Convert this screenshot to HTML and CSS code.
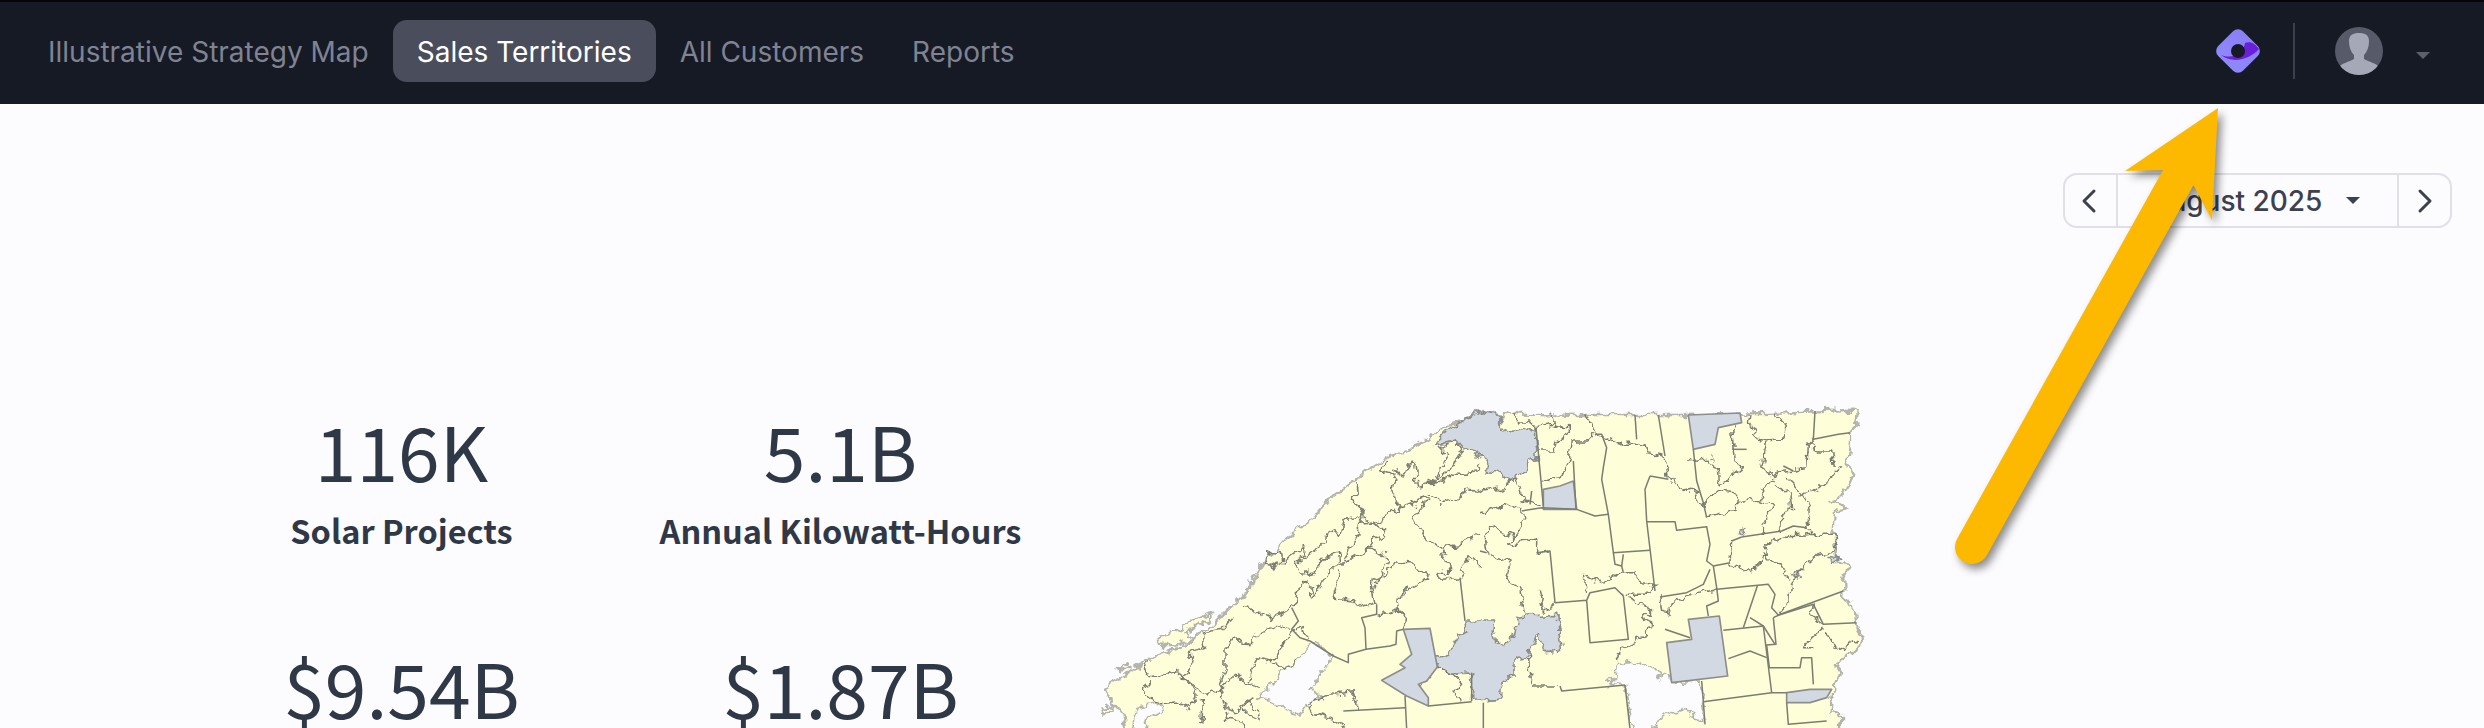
FILE: index.html
```html
<!DOCTYPE html>
<html lang="en">
<head>
    <meta charset="UTF-8">
    <title>Sales Territories</title>
    <link rel="stylesheet" href="styles.css">
</head>
<body>
    <header class="topbar">
        <nav class="nav">
            <a class="nav-item">Illustrative Strategy Map</a>
            <a class="nav-item active">Sales Territories</a>
            <a class="nav-item">All Customers</a>
            <a class="nav-item">Reports</a>
        </nav>
        <div class="topbar-right">
            <svg class="logo" viewBox="0 0 46 46">
                <defs>
                    <linearGradient id="logoFill" x1="0" y1="0" x2="0" y2="1">
                        <stop offset="0" stop-color="#8a80f5"/>
                        <stop offset="1" stop-color="#8f88fb"/>
                    </linearGradient>
                </defs>
                <rect x="5.5" y="5.5" width="35" height="35" rx="7" transform="rotate(45 23 23)" fill="url(#logoFill)"/>
                <path d="M6 27 C17 31 28 27 30 15 C36 13 40 16 44 21 C36 30 19 37 6 27 Z" fill="#6a1fd8"/>
                <circle cx="23" cy="23" r="7" fill="#161a25"/>
            </svg>
            <div class="divider"></div>
            <svg class="avatar" viewBox="0 0 48 48">
                <clipPath id="avatarClip"><circle cx="24" cy="24" r="24"/></clipPath>
                <circle cx="24" cy="24" r="24" fill="#575b69"/>
                <g clip-path="url(#avatarClip)" fill="#a5a8b7">
                    <path d="M14 14 C14 8 18 6 24 6 C30 6 34 8 34 14 C34 20 32 25 29 28 L29 32 C34 35 41 36 44 40 L44 48 L4 48 L4 40 C7 36 14 35 19 32 L19 28 C16 25 14 20 14 14 Z"/>
                </g>
            </svg>
            <span class="caret caret-nav"></span>
        </div>
    </header>

    <div class="toolbar">
        <div class="month-picker">
            <button class="month-btn">
                <svg viewBox="0 0 16 26" class="chev"><path d="M13 3 L3 13 L13 23"/></svg>
            </button>
            <div class="month-label">August 2025 <span class="caret"></span></div>
            <button class="month-btn">
                <svg viewBox="0 0 16 26" class="chev"><path d="M3 3 L13 13 L3 23"/></svg>
            </button>
        </div>
    </div>

    <main class="content">
        <section class="stats">
            <div class="stat">
                <div class="stat-value">116K</div>
                <div class="stat-label">Solar Projects</div>
            </div>
            <div class="stat">
                <div class="stat-value">5.1B</div>
                <div class="stat-label">Annual Kilowatt-Hours</div>
            </div>
            <div class="stat">
                <div class="stat-value">$9.54B</div>
            </div>
            <div class="stat">
                <div class="stat-value">$1.87B</div>
            </div>
        </section>

        <svg class="map" viewBox="0 0 2400 1080">
            <defs>
                <!-- roughens the hand traced borders so they read like real district lines -->
                <filter id="rough" filterUnits="userSpaceOnUse" x="0" y="0" width="2400" height="1080">
                    <feTurbulence type="fractalNoise" baseFrequency="0.035" numOctaves="3" seed="7"/>
                    <feDisplacementMap in="SourceGraphic" scale="34" xChannelSelector="R" yChannelSelector="G"/>
                </filter>
            </defs>

            <g class="rough">
                <!-- land -->
                <path class="land" d="M150 1080 L130 975 L100 940 L75 900 L90 880 L120 865 L160 835 L200 808 L240 790 L300 770 L340 745 L400 700 L450 650 L490 615 L510 590 L520 560 L555 505 L590 475 L615 445 L660 410 L700 380 L760 315 L830 265 L880 225 L920 200 L975 180 L1010 165 L1060 130 L1100 100 L1150 90 L1200 60 L1270 70 L1305 65 L1320 68 L1500 72 L1820 72 L1980 68 L2200 62 L2320 56 L2330 60 L2325 110 L2310 125 L2310 160 L2300 215 L2320 250 L2310 280 L2290 310 L2260 330 L2280 340 L2300 350 L2265 360 L2260 430 L2265 480 L2270 510 L2305 530 L2290 560 L2290 620 L2320 640 L2330 700 L2350 745 L2320 780 L2270 820 L2280 850 L2260 890 L2255 960 L2280 965 L2280 1080 Z"/>
                <path class="land" d="M235 735 L300 715 L350 680 L400 665 L370 700 L310 725 L340 740 L280 765 L240 765 Z"/>
                <path class="land" d="M115 830 L135 818 L155 828 L125 840 Z"/>
                <path class="land" d="M65 950 L95 945 L95 960 L70 965 Z"/>

                <!-- holes -->
                <path class="hole" d="M700 755 L760 795 L690 900 L720 918 L685 940 L660 975 L620 955 L570 930 L530 925 L610 835 L650 810 L690 760 Z"/>
                <path class="hole" d="M140 1080 L170 950 L240 935 L250 960 L200 990 L170 1080 Z"/>
                <path class="hole" d="M1585 880 L1605 860 L1610 815 L1670 810 L1720 830 L1745 860 L1772 850 L1775 875 L1860 870 L1875 995 L1840 975 L1810 955 L1770 965 L1720 1000 L1710 1080 L1670 1080 L1650 965 L1640 885 Z"/>

                <!-- grey districts with rough edges -->
                <path class="grey" d="M1130 100 L1200 62 L1270 72 L1250 100 L1290 125 L1365 110 L1372 200 L1345 205 L1340 240 L1300 255 L1300 280 L1270 250 L1230 240 L1200 195 L1165 175 L1130 150 L1100 155 L1060 165 L1110 110 Z"/>
                <path class="grey" d="M1072 828 L1070 800 L1110 790 L1135 730 L1160 725 L1155 690 L1240 690 L1250 760 L1300 740 L1315 680 L1335 675 L1430 670 L1445 780 L1395 785 L1375 725 L1350 770 L1345 795 L1305 800 L1305 855 L1270 860 L1265 920 L1200 930 L1175 930 L1175 845 L1120 850 Z"/>
                <path class="grey" d="M1975 420 L2000 410 L1990 435 Z M2245 495 L2285 505 L2255 515 Z M2140 545 L2165 540 L2150 570 Z"/>

                <g class="lines">
                    <path d="M555 510 L570 485 L600 475 L605 515 L580 525 Z"/>
                    <path d="M610 515 L640 490 L665 470 L680 485 L645 520 L665 550 L700 540 L745 490 L775 480 L780 525 L730 560 L700 620 L680 570 L655 590 L650 630 L630 650 L575 685 L495 645"/>
                    <path d="M650 520 L680 495 L740 450 L745 420 L780 430 L790 390 L835 380 L840 420 L810 470 L785 520 L840 490 L870 475 L915 490 L925 510 L900 560 L880 565 L875 590 L885 640 L855 650 L820 630 L760 625 L770 580 L780 540"/>
                    <path d="M830 265 L835 310 L815 320 L850 370 L840 400 L885 395 L960 350 L935 300 L945 255 L900 240 L920 210"/>
                    <path d="M850 380 L920 420 L880 450 L850 490"/>
                    <path d="M940 240 L970 255 L1000 210 L1010 285 L1060 280 L1100 195 L1080 170 L1130 150 L1150 180 L1110 240 L1040 280 L1080 270 L1120 250 L1175 250 L1200 220"/>
                    <path d="M1040 310 L1080 340 L1130 320 L1180 290 L1200 300"/>
                    <path d="M960 350 L1000 340 L1030 315 L1040 330 L1000 380 L1030 430 L1080 470 L1130 465 L1200 430"/>
                    <path d="M1080 470 L1105 520 L1110 550 L1075 545 L1080 565 L1140 560 L1170 500 L1200 530"/>
                    <path d="M950 630 L970 600 L1050 560 L1000 520 L945 515 L920 550 L885 575"/>
                    <path d="M950 630 L955 660 L980 680 L970 715"/>
                    <path d="M890 670 L910 665 L945 655 L980 680"/>
                    <path d="M630 715 L590 700 L520 740 L505 770 L465 735 L435 770 L435 840 L415 895 L385 910 L345 885 L305 860 L340 800 L325 785 L375 770 L370 730 L430 715 L460 680"/>
                    <path d="M685 745 L665 700 L640 720 L590 790 L575 810 L615 835 L650 810"/>
                    <path d="M575 810 L530 800 L520 830 L505 875 L540 895"/>
                    <path d="M505 880 L470 850 L440 870 L415 895 L435 950 L470 960 L520 920"/>
                    <path d="M305 860 L290 835 L240 855 L210 860 L190 830 L210 810"/>
                    <path d="M305 860 L350 900 L330 950 L290 930 L240 935 L195 915 L190 900 L210 870"/>
                    <path d="M685 940 L730 915 L820 905 L835 955"/>
                    <path d="M690 945 L700 965 L760 985 L800 1014"/>
                    <path d="M475 950 L500 930 L540 960 L530 985 L480 960"/>
                    <path d="M435 960 L440 985 L490 990 L510 1014"/>
                    <path d="M350 930 L370 935 L365 1000"/>
                    <path d="M1120 850 L1145 880 L1125 900 L1140 930"/>
                    <path d="M1015 880 L1040 870 L1072 828 L1120 850"/>
                </g>

                <g class="lines" transform="translate(1200 0)">
                    <path d="M105 65 L110 90 L150 90 L165 110 L220 100 L215 65"/>
                    <path d="M220 105 L265 110 L265 130 L225 150 L220 180 L175 180"/>
                    <path d="M320 70 L345 125 L320 150 L280 150 L270 210 L240 260 L210 265 L185 275"/>
                    <path d="M345 130 L410 150 L430 160 L490 160 L500 185 L555 195 L565 260 L600 300 L640 295 L655 330 L675 340"/>
                    <path d="M615 210 L690 205 L715 240 L720 285 L790 230 L765 210 L757 100"/>
                    <path d="M680 378 L765 355 L770 310 L710 300 L670 340"/>
                    <path d="M765 335 L840 325 L880 345 L850 400 L850 430"/>
                    <path d="M810 70 L805 100 L830 115 L830 145 L860 150 L910 145 L920 100 L885 70"/>
                    <path d="M860 150 L845 230 L885 260 L895 240 L980 230 L985 160 L1000 145"/>
                    <path d="M985 155 L1015 180 L1055 180 L1060 225 L1090 225"/>
                    <path d="M890 265 L840 295 L850 330"/>
                    <path d="M885 280 L930 310 L935 355 L900 375 L905 420"/>
                    <path d="M920 260 L960 300 L985 345 L990 380 L980 410 L1010 430 L1062 430"/>
                    <path d="M965 310 L1020 290 L1050 260 L1090 225"/>
                    <path d="M1062 430 L1065 480 L1010 495 L980 520 L935 575 L930 625 L897 672"/>
                    <path d="M755 450 L750 515 L820 545 L850 490 L870 510 L900 520 L930 565"/>
                    <path d="M850 490 L865 490 L860 460 L920 435 L1010 430"/>
                    <path d="M1030 710 L995 740 L970 770 L1000 770"/>
                    <path d="M1040 725 L1070 780 L1090 770 L1130 750"/>
                    <path d="M1030 700 L1005 680 L990 670 L1000 640"/>
                    <path d="M320 605 L312 550 L370 580 L410 545 L470 545 L480 575 L530 580 L505 610 L430 610"/>
                    <path d="M540 618 L545 660 L560 665 L590 630 L650 605 L710 597"/>
                    <path d="M445 620 L490 640 L515 660 L490 685 L520 700 L480 745 L420 770 L405 810"/>
                    <path d="M130 670 L120 590 L80 565 L90 510 L20 485 L15 420 L40 405 L105 440 L130 400 L125 360 L85 340 L0 365"/>
                    <path d="M105 440 L80 465 L130 450 L170 445 L170 485 L210 480"/>
                    <path d="M225 635 L190 660 L175 595"/>
                    <path d="M0 300 L70 290 L110 260 L130 330 L185 345"/>
                    <path d="M145 795 L150 860 L165 885 L240 885"/>
                </g>
            </g>

            <path class="grey" d="M1825 72 L1980 66 L1985 95 L1915 110 L1905 160 L1840 175 Z"/>
            <path class="grey" d="M1390 295 L1440 285 L1480 270 L1490 355 L1390 355 Z"/>
            <path class="grey" d="M905 868 L975 830 L960 820 L995 790 L970 715 L1050 712 L1072 828 L1040 870 L1015 880 L1045 920 L1045 945 L980 915 Z"/>
            <path class="grey" d="M1760 755 L1835 745 L1825 685 L1918 675 L1943 855 L1775 875 Z"/>
            <path class="grey" d="M2120 905 L2190 895 L2255 895 L2240 920 L2190 935 L2120 935 Z"/>

            <g class="lines">
                <path d="M975 915 L980 1014"/>
                <path d="M790 960 L975 950"/>
                <path d="M1045 945 L1175 932"/>
                <path d="M1175 845 L1175 930"/>
                <path d="M1140 560 L1155 690"/>
                <path d="M890 640 L890 670 L845 680 L855 710 L858 775 L930 765 L948 760 L950 720 L970 715"/>
                <path d="M858 775 L805 790 L805 815 L760 795 L690 750 L660 740 L635 715 L655 690 L635 650"/>
            </g>

            <g class="lines" transform="translate(1200 0)">
                <path d="M345 130 L365 130 L380 170 L370 230 L365 265 L385 370 L400 485 L510 478"/>
                <path d="M465 72 L470 145"/>
                <path d="M535 72 L555 195"/>
                <path d="M640 175 L650 270 L670 335 L680 380"/>
                <path d="M510 255 L565 265"/>
                <path d="M510 255 L495 295 L500 390 L525 600"/>
                <path d="M500 392 L585 392 L590 418 L680 407 L690 460 L680 510 L700 525 L710 590 L715 630 L680 645 L685 675"/>
                <path d="M785 438 L905 420 L940 405 L980 410"/>
                <path d="M757 175 L800 175"/>
                <path d="M1005 60 L1000 145 L1075 130 L1110 125"/>
                <path d="M910 225 L940 240"/>
                <path d="M755 450 L785 438"/>
                <path d="M700 525 L750 515"/>
                <path d="M710 595 L865 580 L885 610 L875 650 L895 672 L1090 600"/>
                <path d="M832 585 L790 710"/>
                <path d="M730 718 L850 705 L885 760"/>
                <path d="M810 680 L850 705"/>
                <path d="M880 680 L888 760 L860 762 L868 830 L960 830 L965 800 L995 800 L1000 880"/>
                <path d="M880 680 L897 672 L1000 640 L1030 700 L1130 695"/>
                <path d="M745 803 L810 780 L860 800"/>
                <path d="M850 705 L875 905"/>
                <path d="M670 932 L875 905 L920 905"/>
                <path d="M665 870 L670 932 L675 1000"/>
                <path d="M920 935 L925 1000 L1040 990"/>
                <path d="M225 635 L320 628 L330 755 L445 745 L430 615 L405 590 L330 605 L320 628"/>
                <path d="M400 485 L405 520 L425 525 L430 490"/>
                <path d="M425 525 L430 545"/>
                <path d="M540 618 L620 605 L670 580 L690 535"/>
                <path d="M555 715 L630 740"/>
                <path d="M240 885 L245 900 L435 882"/>
                <path d="M170 485 L210 480 L225 635"/>
                <path d="M125 360 L185 350 L290 355 L345 375 L385 370"/>
                <path d="M155 300 L150 340"/>
                <path d="M168 110 L190 345"/>
                <path d="M280 210 L288 355"/>
                <path d="M0 480 L20 485"/>
                <path d="M10 935 L10 1014"/>
                <path d="M435 882 L450 1014"/>
            </g>
        </svg>
    </main>

    <!-- callout arrow drawn over the page -->
    <svg class="callout" viewBox="1940 100 300 480">
        <g class="callout-shape">
            <path class="callout-head" d="M2218 108 L2125 171 L2163 170 L2194 186 L2212 220 Z"/>
            <path class="callout-shaft" d="M2178 178 L1972 547"/>
        </g>
    </svg>
</body>
</html>
```

FILE: styles.css
```css
html, body {
    height: 728px;
    overflow: hidden;
}

body {
    position: relative;
    margin: 0;
    background-color: #fcfcfe;
    font-family: Inter, "Liberation Sans", sans-serif;
}

.topbar {
    display: flex;
    justify-content: space-between;
    align-items: center;
    box-sizing: border-box;
    height: 104px;
    padding: 0 54px 4px 24px;
    background-color: #161a25;
    border-top: 2px solid #05060a;
}

.nav {
    display: flex;
    align-items: center;
}

.nav-item {
    padding: 15px 24px 13px;
    border-radius: 14px;
    color: #7f8392;
    font-size: 28px;
    line-height: 34px;
}

.nav-item.active {
    background-color: #4a4e5c;
    color: #fff;
}

.topbar-right {
    display: flex;
    align-items: center;
}

.logo {
    width: 46px;
    height: 46px;
}

.divider {
    width: 2px;
    height: 56px;
    margin: 0 40px 0 32px;
    background-color: #3b3f4d;
}

.avatar {
    width: 48px;
    height: 48px;
    margin-right: 33px;
}

.caret {
    display: inline-block;
    width: 0;
    height: 0;
    border-left: 7px solid transparent;
    border-right: 7px solid transparent;
    border-top: 7px solid #3c4150;
    margin-left: 24px;
    vertical-align: middle;
}

.caret-nav {
    margin: 8px 0 0 0;
    border-top-color: #5c606d;
}

.toolbar {
    display: flex;
    justify-content: flex-end;
    padding: 69px 32px 0 0;
}

.month-picker {
    display: flex;
    box-sizing: border-box;
    width: 389px;
    height: 55px;
    border: 2px solid #dfe0e8;
    border-radius: 14px;
}

.month-btn {
    display: flex;
    align-items: center;
    justify-content: center;
    width: 51px;
    padding: 0;
    border: none;
    background: none;
}

.month-btn:first-child {
    padding-right: 3px;
}

.chev {
    width: 16px;
    height: 26px;
    fill: none;
    stroke: #3c4150;
    stroke-width: 3;
    stroke-linecap: round;
    stroke-linejoin: round;
}

.month-label {
    flex: 1;
    display: flex;
    align-items: center;
    justify-content: center;
    padding-right: 5px;
    border-left: 2px solid #dfe0e8;
    border-right: 2px solid #dfe0e8;
    color: #3c4150;
    font-size: 28px;
    font-weight: 500;
}

.content {
    display: flex;
    padding: 163px 0 0 182px;
}

.stats {
    display: grid;
    grid-template-columns: 439px 439px;
    grid-auto-rows: 237px;
    width: 898px;
    flex: none;
    padding-top: 19px;
    color: #2f3846;
    font-family: "Noto Sans CJK SC", "Noto Sans", sans-serif;
    text-align: center;
}

.stat-value {
    font-size: 75px;
    line-height: 80px;
}

.stat-label {
    margin-top: 20px;
    font-size: 32.5px;
    font-weight: 700;
    line-height: 40px;
}

.map {
    flex: none;
    width: 800px;
    height: 360px;
}

.map path {
    stroke-linejoin: round;
}

.rough {
    filter: url(#rough);
}

.land {
    fill: #fefed8;
    stroke: #b4b4ac;
    stroke-width: 7;
}

.hole {
    fill: #fcfcfe;
    stroke: #b4b4ac;
    stroke-width: 5;
}

.grey {
    fill: #d3d9e2;
    stroke: #8c8e8a;
    stroke-width: 5;
}

.lines path {
    fill: none;
    stroke: #7b7c72;
    stroke-width: 4.5;
}

.callout {
    position: absolute;
    left: 1940px;
    top: 100px;
    width: 300px;
    height: 480px;
    overflow: visible;
}

.callout-shape {
    filter: drop-shadow(4px 5px 4px rgba(0, 0, 0, 0.45));
}

.callout-head {
    fill: #fdb900;
}

.callout-shaft {
    fill: none;
    stroke: #fdb900;
    stroke-width: 34;
    stroke-linecap: round;
}
```
